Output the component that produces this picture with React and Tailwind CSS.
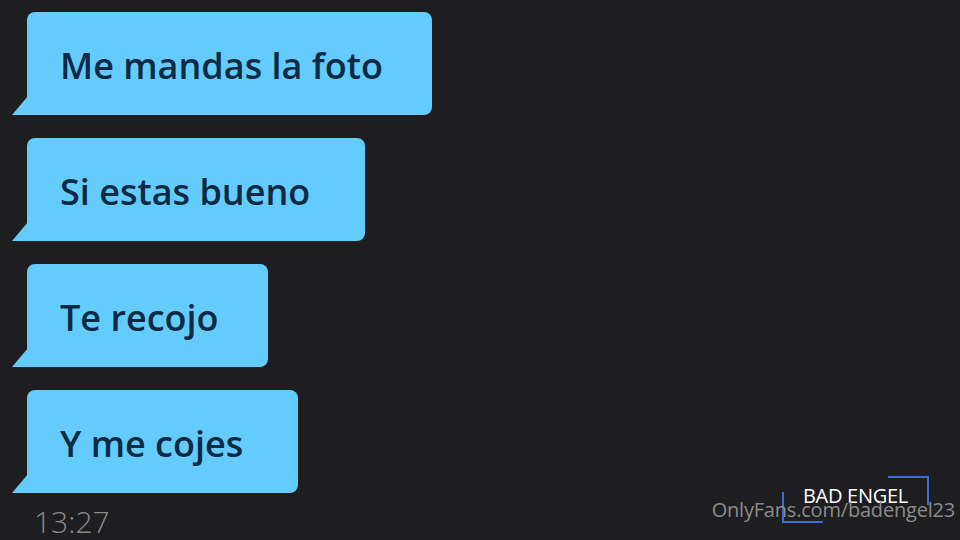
import React from "react";

function Bubble({ text, w }) {
  return (
    <div className={`relative ml-[15px] h-[103px] ${w} rounded-[8px] rounded-bl-none bg-[#64cbfd] flex items-center pl-[33px]`}>
      <svg className="absolute left-[-15px] bottom-0" width="16" height="19" viewBox="0 0 16 19">
        <polygon points="16,0 16,19 0,19" fill="#64cbfd" />
      </svg>
      <span className="text-[#0c2a44] text-[36px] font-semibold leading-none pt-[4px]" style={{ fontFamily: '"Open Sans", "Noto Sans", sans-serif' }}>
        {text}
      </span>
    </div>
  );
}

export default function App() {
  return (
    <div className="relative w-[960px] h-[540px] overflow-hidden bg-[#1e1e20]">
      <div className="flex flex-col gap-[23px] pt-[12px] pl-[12px]">
        <Bubble text="Me mandas la foto" w="w-[405px]" />
        <Bubble text="Si estas bueno" w="w-[338px]" />
        <Bubble text="Te recojo" w="w-[241px]" />
        <Bubble text="Y me cojes" w="w-[271px]" />
      </div>
      <div className="pl-[34px] pt-[14px] text-[30px] leading-none text-[#8a8a8a] font-light" style={{ fontFamily: '"Open Sans", sans-serif' }}>
        13:27
      </div>
      <div className="absolute left-[782px] top-[476px] w-[147px] h-[47px]">
        <div className="absolute right-0 top-0 w-[41px] h-[29px] border-t-2 border-r-2 border-[#3b6fd6]" />
        <div className="absolute left-0 bottom-0 w-[41px] h-[31px] border-b-2 border-l-2 border-[#3b6fd6]" />
      </div>
      <div className="absolute left-[803px] top-[486px] text-[20px] leading-none text-white tracking-[-0.3px]" style={{ fontFamily: '"Open Sans", sans-serif' }}>
        BAD ENGEL
      </div>
      <div className="absolute right-[5px] top-[500px] text-[20px] leading-none text-[#8c8c8c] tracking-[-0.2px]" style={{ fontFamily: '"Open Sans", sans-serif' }}>
        OnlyFans.com/badengel23
      </div>
    </div>
  );
}
